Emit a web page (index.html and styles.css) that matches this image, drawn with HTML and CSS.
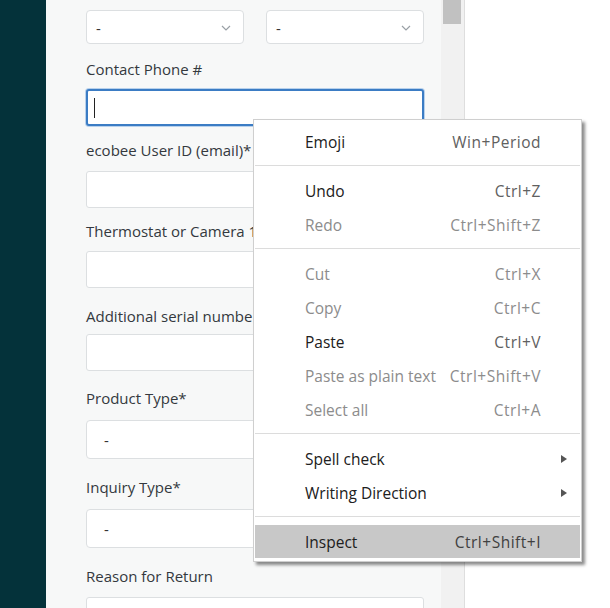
FILE: index.html
```html
<!DOCTYPE html>
<html>
<head>
<meta charset="utf-8">
<link rel="stylesheet" href="styles.css">
</head>
<body>
<div class="app">
  <aside class="sidebar"></aside>
  <main class="panel">
    <div class="select-row">
      <div class="select small"><span>-</span><svg class="chev" width="10" height="6" viewBox="0 0 10 6"><path d="M1 1l4 4 4-4" fill="none" stroke="#9aa0a6" stroke-width="1.2"/></svg></div>
      <div class="select small"><span>-</span><svg class="chev" width="10" height="6" viewBox="0 0 10 6"><path d="M1 1l4 4 4-4" fill="none" stroke="#9aa0a6" stroke-width="1.2"/></svg></div>
    </div>
    <div class="field m14">
      <label class="label lb9">Contact Phone #</label>
      <div class="input focused"><span class="caret"></span></div>
    </div>
    <div class="field m13">
      <label class="label">ecobee User ID (email)*</label>
      <div class="input"></div>
    </div>
    <div class="field m12">
      <label class="label lb9">Thermostat or Camera 1 Serial Number*</label>
      <div class="input"></div>
    </div>
    <div class="field">
      <label class="label lb7">Additional serial numbers</label>
      <div class="input"></div>
    </div>
    <div class="field m16">
      <label class="label lb11">Product Type*</label>
      <div class="select big"><span>-</span></div>
    </div>
    <div class="field">
      <label class="label lb11">Inquiry Type*</label>
      <div class="select big"><span>-</span></div>
    </div>
    <div class="field">
      <label class="label">Reason for Return</label>
      <div class="input"></div>
    </div>
  </main>
  <div class="scrollbar"><div class="thumb"></div></div>
  <div class="blank"></div>

  <div class="menu">
    <div class="item"><span class="name">Emoji</span><span class="key">Win+Period</span></div>
    <div class="sep"></div>
    <div class="item"><span class="name">Undo</span><span class="key">Ctrl+Z</span></div>
    <div class="item disabled"><span class="name">Redo</span><span class="key">Ctrl+Shift+Z</span></div>
    <div class="sep"></div>
    <div class="item disabled"><span class="name">Cut</span><span class="key">Ctrl+X</span></div>
    <div class="item disabled"><span class="name">Copy</span><span class="key">Ctrl+C</span></div>
    <div class="item"><span class="name">Paste</span><span class="key">Ctrl+V</span></div>
    <div class="item disabled"><span class="name">Paste as plain text</span><span class="key">Ctrl+Shift+V</span></div>
    <div class="item disabled"><span class="name">Select all</span><span class="key">Ctrl+A</span></div>
    <div class="sep"></div>
    <div class="item sub"><span class="name">Spell check</span><span class="arrow"></span></div>
    <div class="item sub"><span class="name">Writing Direction</span><span class="arrow"></span></div>
    <div class="sep"></div>
    <div class="item hover"><span class="name">Inspect</span><span class="key">Ctrl+Shift+I</span></div>
  </div>
</div>
</body>
</html>
```
FILE: styles.css
```css
* { box-sizing: border-box; }
html, body { margin: 0; padding: 0; }
body {
  width: 610px;
  height: 608px;
  overflow: hidden;
  font-family: "Open Sans", "Noto Sans", sans-serif;
  background: #fff;
}
.app {
  position: relative;
  display: flex;
  height: 608px;
}
.sidebar {
  width: 46px;
  flex: none;
  background: #04323a;
}
.panel {
  width: 395px;
  flex: none;
  background: #f7f8f8;
  padding: 10px 17px 0 40px;
  display: flex;
  flex-direction: column;
}
.select-row {
  display: flex;
  gap: 22px;
}
.select {
  position: relative;
  background: #fff;
  border: 1px solid #dcdfe1;
  border-radius: 4px;
  font-size: 15px;
  color: #333;
  display: flex;
  align-items: center;
}
.select.small {
  width: 158px;
  height: 34px;
  padding-left: 9px;
  padding-top: 2px;
}
.select.big {
  height: 39px;
  padding-left: 17px;
}
.chev {
  position: absolute;
  right: 12px;
  top: 14px;
}
.field { display: flex; flex-direction: column; margin-top: 17px; }
.m12 { margin-top: 12px; }
.m13 { margin-top: 13px; }
.m14 { margin-top: 14px; }
.m16 { margin-top: 16px; }
.label {
  font-size: 15px;
  line-height: 22px;
  color: #34393e;
  white-space: nowrap;
  margin-bottom: 10px;
}
.lb7 { margin-bottom: 7px; }
.lb9 { margin-bottom: 9px; }
.lb11 { margin-bottom: 11px; }
.input {
  height: 37px;
  background: #fff;
  border: 1px solid #dcdfe1;
  border-radius: 3px;
}
.input.focused {
  border: 2px solid #3b7cc4;
  box-shadow: 0 0 0 1px #b8d1ec;
  padding: 7px 0 0 6px;
}
.caret {
  display: block;
  width: 1px;
  height: 20px;
  background: #222;
}
.scrollbar {
  width: 24px;
  flex: none;
  background: #f1f1f1;
  border-right: 1px solid #dedede;
  padding: 0 3px 0 2px;
}
.thumb {
  height: 24px;
  background: #c1c1c1;
}
.blank { flex: 1; background: #fff; }

.menu {
  position: absolute;
  left: 253px;
  top: 119px;
  width: 329px;
  background: #fff;
  border: 1px solid #cfcfcf;
  box-shadow: 3px 3px 3px rgba(0,0,0,0.45);
  padding: 5px 1px 3px;
  font-family: "Open Sans", "Noto Sans", sans-serif;
  font-size: 15.5px;
}
.item {
  height: 34px;
  display: flex;
  align-items: center;
  justify-content: space-between;
  padding: 0 39px 0 50px;
  color: #202020;
  white-space: nowrap;
}
.item .key { color: #606060; letter-spacing: 0.5px; }
.item.disabled .name, .item.disabled .key { color: #8c8c8c; }
.item.hover { background: #c8c8c8; height: 33px; }
.item.hover .key { color: #404040; }
.item.sub { padding-right: 13px; }
.arrow {
  width: 0;
  height: 0;
  border-top: 4px solid transparent;
  border-bottom: 4px solid transparent;
  border-left: 6px solid #555;
}
.sep {
  height: 1px;
  background: #dcdcdc;
  margin: 6px 0 8px;
}
```
